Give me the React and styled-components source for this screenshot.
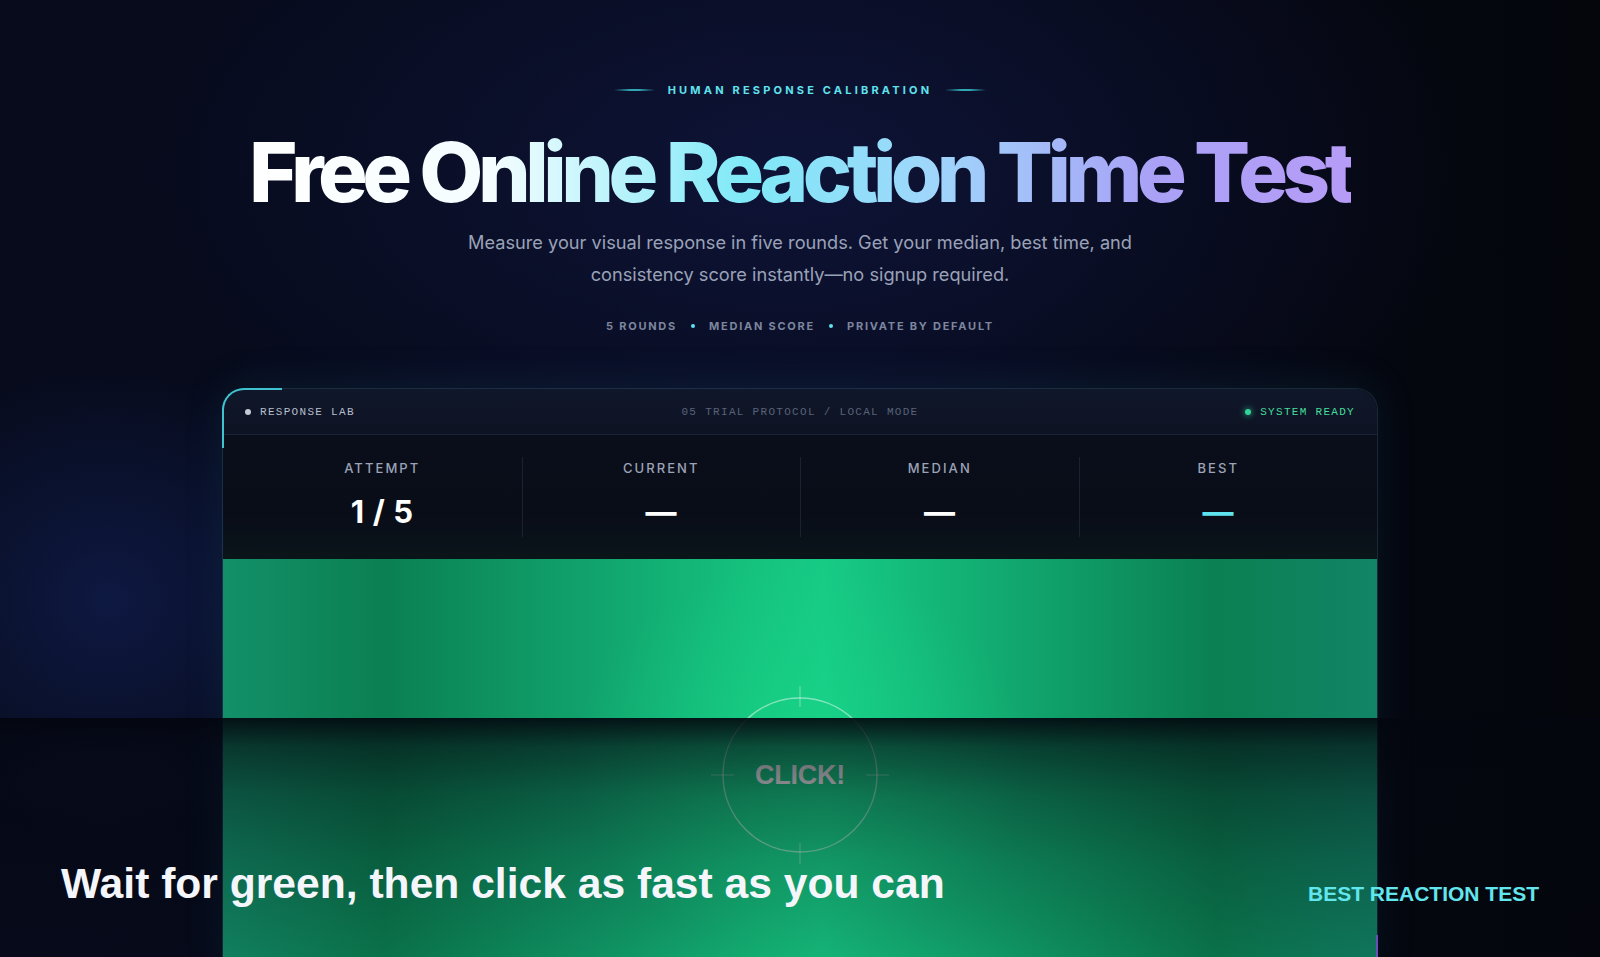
import React from "react";
import styled, { createGlobalStyle } from "styled-components";

const GlobalStyle = createGlobalStyle`
  html, body {
    margin: 0;
    padding: 0;
    background: #05070e;
  }
  * {
    box-sizing: border-box;
  }
`;

const Page = styled.div`
  position: relative;
  width: 100%;
  height: 100vh;
  overflow: hidden;
  font-family: Inter, "Noto Sans", sans-serif;
  background:
    radial-gradient(ellipse 360px 330px at 110px 600px, rgba(28, 52, 140, 0.34), transparent 72%),
    radial-gradient(ellipse 950px 520px at 50% 170px, rgba(22, 30, 86, 0.5), transparent 72%),
    linear-gradient(90deg, #070b1c 0%, #060918 55%, #04060c 100%);
`;

const Hero = styled.header`
  display: flex;
  flex-direction: column;
  align-items: center;
  padding-top: 82px;
`;

const Eyebrow = styled.div`
  display: flex;
  align-items: center;
  gap: 13px;
  height: 16px;
  font-size: 11px;
  font-weight: 700;
  letter-spacing: 0.29em;
  color: #5fe3ee;

  &::before,
  &::after {
    content: "";
    width: 41px;
    height: 2px;
    background: linear-gradient(90deg, transparent, #2fa7b4 40%, #2fa7b4 60%, transparent);
  }
`;

const Title = styled.h1`
  margin: 31px 0 0;
  font-size: 83px;
  line-height: 86px;
  font-weight: 800;
  letter-spacing: -0.066em;
  white-space: nowrap;
  background: linear-gradient(90deg, #ffffff 0%, #f4fdff 22%, #7fe9f7 45%, #9fd6fb 62%, #a9a1f6 82%, #b69cf7 100%);
  -webkit-background-clip: text;
  background-clip: text;
  color: transparent;
`;

const Lead = styled.p`
  margin: 11px 0 0;
  max-width: 720px;
  text-align: center;
  font-size: 18.2px;
  line-height: 32px;
  color: #9aa2b8;
`;

const Meta = styled.div`
  margin-top: 28px;
  display: flex;
  align-items: center;
  gap: 14px;
  height: 16px;
  font-size: 11px;
  font-weight: 700;
  letter-spacing: 0.16em;
  color: #7d869f;
`;

const Dot = styled.span`
  width: ${(p) => p.$size || 4}px;
  height: ${(p) => p.$size || 4}px;
  border-radius: 50%;
  background: ${(p) => p.$color || "#5fe3ee"};
  box-shadow: ${(p) => (p.$glow ? `0 0 6px ${p.$color}` : "none")};
`;

const Panel = styled.section`
  position: relative;
  width: 1156px;
  margin: 54px auto 0;
  border: 1px solid rgba(96, 180, 200, 0.2);
  border-bottom: none;
  border-radius: 22px 22px 0 0;
  box-shadow: 0 -6px 40px rgba(40, 130, 170, 0.12);

  &::before {
    content: "";
    position: absolute;
    top: -1px;
    left: -1px;
    width: 58px;
    height: 58px;
    border-top: 2px solid #3fc3cf;
    border-left: 2px solid #3fc3cf;
    border-top-left-radius: 22px;
    pointer-events: none;
  }

  &::after {
    content: "";
    position: absolute;
    right: -1px;
    top: 546px;
    width: 2px;
    height: 60px;
    background: #7b5bd6;
    pointer-events: none;
  }
`;

const Bar = styled.div`
  display: grid;
  grid-template-columns: 1fr auto 1fr;
  align-items: center;
  height: 46px;
  padding: 0 22px;
  border-radius: 22px 22px 0 0;
  background: linear-gradient(180deg, #10172a 0%, #0d1323 100%);
  border-bottom: 1px solid #1b2233;
  font-family: "Liberation Mono", "DejaVu Sans Mono", monospace;
  font-size: 11px;
  letter-spacing: 1.3px;
`;

const BarItem = styled.div`
  display: flex;
  align-items: center;
  gap: 9px;
  justify-content: ${(p) => p.$align || "flex-start"};
  color: ${(p) => p.$color};
`;

const Stats = styled.div`
  display: grid;
  grid-template-columns: repeat(4, 1fr);
  padding: 22px 20px;
  background: linear-gradient(180deg, #0a0e1a 0%, #090d18 65%, #0a1519 100%);
`;

const Stat = styled.div`
  display: flex;
  flex-direction: column;
  align-items: center;
  height: 80px;
  padding-top: 3px;
  border-left: ${(p) => (p.$first ? "none" : "1px solid #1b2131")};
`;

const StatLabel = styled.div`
  font-size: 13px;
  font-weight: 500;
  letter-spacing: 0.16em;
  line-height: 16px;
  color: #9ca3b8;
`;

const StatValue = styled.div`
  margin-top: 19px;
  font-size: 31px;
  line-height: 34px;
  font-weight: 700;
  letter-spacing: 0.02em;
  color: ${(p) => p.$color || "#ffffff"};
`;

const Stage = styled.div`
  display: flex;
  justify-content: center;
  height: 420px;
  padding-top: 126px;
  background:
    radial-gradient(ellipse 300px 260px at 50% 200px, rgba(26, 222, 140, 0.45), transparent 75%),
    linear-gradient(90deg, #139069 0%, #0b8052 14%, #11a36d 32%, #15c27e 46%, #17cb85 52%, #12ad72 66%, #0b8052 86%, #118566 100%);
`;

const Target = styled.div`
  display: grid;
  place-items: center;
  width: 180px;
  height: 180px;

  & > * {
    grid-area: 1 / 1;
  }
`;

const ClickText = styled.span`
  font-family: "Liberation Sans", Arial, sans-serif;
  font-weight: 700;
  font-size: 27px;
  letter-spacing: -0.01em;
  color: #ffffff;
`;

const Overlay = styled.div`
  position: absolute;
  left: 0;
  right: 0;
  bottom: 0;
  height: 239px;
  padding: 141px 61px 0;
  background: linear-gradient(
    180deg,
    rgba(3, 6, 14, 0.92) 0%,
    rgba(3, 6, 14, 0.64) 12%,
    rgba(3, 6, 14, 0.44) 32%,
    rgba(3, 6, 14, 0.28) 60%,
    rgba(3, 6, 14, 0.12) 100%
  );
`;

const CaptionRow = styled.div`
  display: flex;
  justify-content: space-between;
  align-items: flex-start;
  font-family: "Liberation Sans", Arial, sans-serif;
  font-weight: 700;
`;

const Caption = styled.div`
  font-size: 42.6px;
  line-height: 48px;
  color: #f4f6fb;
`;

const Tag = styled.div`
  margin-top: 23px;
  font-size: 21px;
  line-height: 24px;
  color: #62e6ee;
`;

function Crosshair() {
  return (
    <svg width="180" height="180" viewBox="0 0 180 180" fill="none">
      <circle cx="90" cy="90" r="77" stroke="rgba(255,255,255,0.45)" strokeWidth="1.5" />
      <g stroke="rgba(255,255,255,0.34)" strokeWidth="1.2">
        <line x1="90" y1="1" x2="90" y2="22" />
        <line x1="90" y1="158" x2="90" y2="179" />
        <line x1="1" y1="90" x2="24" y2="90" />
        <line x1="156" y1="90" x2="179" y2="90" />
      </g>
    </svg>
  );
}

const stats = [
  { label: "ATTEMPT", value: "1 / 5" },
  { label: "CURRENT", value: "—" },
  { label: "MEDIAN", value: "—" },
  { label: "BEST", value: "—", color: "#5fe3ee" },
];

export default function App() {
  return (
    <Page>
      <GlobalStyle />
      <Hero>
        <Eyebrow>HUMAN RESPONSE CALIBRATION</Eyebrow>
        <Title>Free Online Reaction Time Test</Title>
        <Lead>
          Measure your visual response in five rounds. Get your median, best time, and
          consistency score instantly—no signup required.
        </Lead>
        <Meta>
          <span>5 ROUNDS</span>
          <Dot />
          <span>MEDIAN SCORE</span>
          <Dot />
          <span>PRIVATE BY DEFAULT</span>
        </Meta>
      </Hero>

      <Panel>
        <Bar>
          <BarItem $color="#b7bfce">
            <Dot $color="#c3cad8" $size={6} />
            RESPONSE LAB
          </BarItem>
          <BarItem $color="#5a6279" $align="center">
            05 TRIAL PROTOCOL / LOCAL MODE
          </BarItem>
          <BarItem $color="#45dc9c" $align="flex-end">
            <Dot $color="#34d399" $size={6} $glow />
            SYSTEM READY
          </BarItem>
        </Bar>
        <Stats>
          {stats.map((s, i) => (
            <Stat key={s.label} $first={i === 0}>
              <StatLabel>{s.label}</StatLabel>
              <StatValue $color={s.color}>{s.value}</StatValue>
            </Stat>
          ))}
        </Stats>
        <Stage>
          <Target>
            <Crosshair />
            <ClickText>CLICK!</ClickText>
          </Target>
        </Stage>
      </Panel>

      <Overlay>
        <CaptionRow>
          <Caption>Wait for green, then click as fast as you can</Caption>
          <Tag>BEST REACTION TEST</Tag>
        </CaptionRow>
      </Overlay>
    </Page>
  );
}
